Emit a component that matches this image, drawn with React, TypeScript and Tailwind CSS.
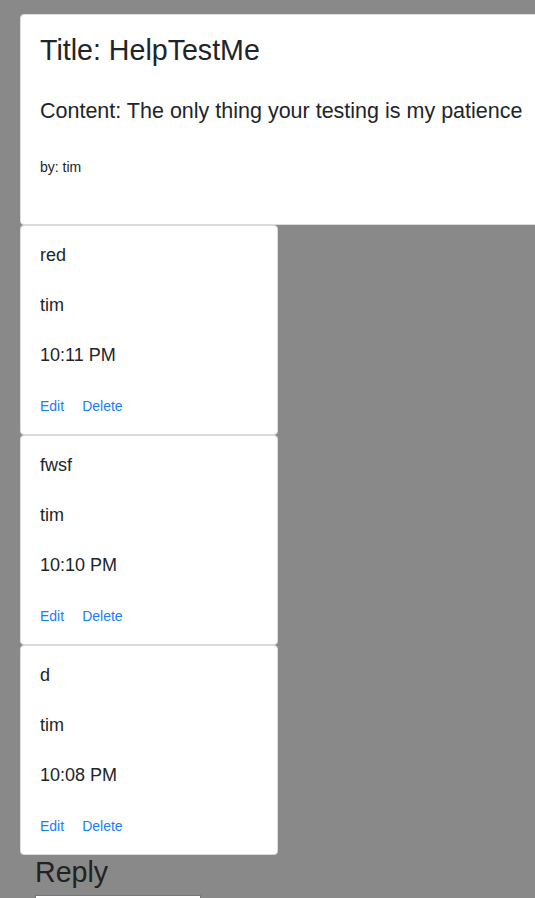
export default function App() {
  const comments = [
    { text: "red", author: "tim", time: "10:11 PM" },
    { text: "fwsf", author: "tim", time: "10:10 PM" },
    { text: "d", author: "tim", time: "10:08 PM" },
  ];

  return (
    <div className="min-h-[898px] w-full overflow-hidden bg-[#898989] pt-[14px] font-['Liberation_Sans',Arial,sans-serif] text-[#212529]">
      <div className="ml-[20px] h-[211px] w-[540px] rounded-[4px] border border-[#dcdcdc] bg-white px-[19px]">
        <h1 className="mt-[18px] text-[28.6px] leading-[34px]">Title: HelpTestMe</h1>
        <p className="mt-[31px] text-[21.5px] leading-[26px]">
          Content: The only thing your testing is my patience
        </p>
        <p className="mt-[35px] text-[14px] leading-[16px]">by: tim</p>
      </div>

      {comments.map((c) => (
        <div
          key={c.time}
          className="ml-[20px] h-[210px] w-[258px] rounded-[4px] border border-[#dcdcdc] bg-white px-[19px] pt-[19px]"
        >
          <p className="text-[18px] leading-[20px]">{c.text}</p>
          <p className="mt-[30px] text-[18px] leading-[20px]">{c.author}</p>
          <p className="mt-[30px] text-[18px] leading-[20px]">{c.time}</p>
          <div className="mt-[31px] flex gap-[18px] text-[14px] leading-[20px] text-[#1a7cff]">
            <a href="#">Edit</a>
            <a href="#">Delete</a>
          </div>
        </div>
      ))}

      <div className="ml-[35px]">
        <h2 className="text-[28.6px] leading-[34px] text-[#222]">Reply</h2>
        <input
          className="mt-[6px] h-[30px] w-[166px] border border-[#767676] bg-white"
          type="text"
        />
      </div>
    </div>
  );
}
